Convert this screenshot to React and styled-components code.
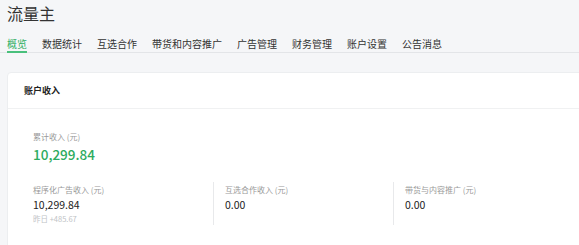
import React from "react";
import styled, { createGlobalStyle } from "styled-components";

const GlobalStyle = createGlobalStyle`
  html, body {
    margin: 0;
    padding: 0;
    background: #f5f6f8;
    overflow: hidden;
  }
  body {
    font-family: "Noto Sans CJK SC", "Noto Sans", sans-serif;
    color: #333;
  }
`;

const Page = styled.div`
  padding-left: 7px;
`;

const Title = styled.h1`
  margin: 0;
  padding-top: 2px;
  font-size: 16px;
  line-height: 22px;
  font-weight: 400;
  color: #333;
`;

const TabBar = styled.nav`
  display: flex;
  gap: 15px;
  margin-top: 13px;
  margin-left: -7px;
  padding-left: 7px;
  border-bottom: 1px solid #e3e5e8;
`;

const Tab = styled.span`
  font-size: 10px;
  line-height: 14px;
  color: ${(p) => (p.$active ? "#2eae63" : "#333")};
  border-bottom: 2px solid ${(p) => (p.$active ? "#49c07c" : "transparent")};
  margin-bottom: -1px;
`;

const Card = styled.section`
  margin-top: 19px;
  margin-right: -10px;
  background: #fff;
  border: 1px solid #eceef0;
  border-radius: 4px;
  min-height: 200px;
`;

const CardHeader = styled.div`
  height: 35px;
  display: flex;
  align-items: center;
  padding-left: 16px;
  border-bottom: 1px solid #f0f1f2;
  font-size: 9px;
  font-weight: 700;
  color: #222;
`;

const CardBody = styled.div`
  padding: 22px 0 0 25px;
`;

const Label = styled.div`
  font-size: 8px;
  line-height: 12px;
  color: #999;
`;

const Total = styled.div`
  margin-top: 2px;
  font-size: 13.5px;
  line-height: 18px;
  font-weight: 500;
  color: #2dab60;
`;

const Stats = styled.div`
  display: flex;
  margin-top: 19px;
`;

const Stat = styled.div`
  width: 180px;
  min-height: 43px;
  padding-top: 2px;
  box-sizing: border-box;
  & + & {
    border-left: 1px solid #e8e9eb;
    padding-left: 11px;
  }
`;

const Value = styled.div`
  margin-top: 1px;
  font-size: 10.5px;
  line-height: 15px;
  color: #222;
`;

const Sub = styled.div`
  margin-top: 1px;
  font-size: 7.5px;
  line-height: 12px;
  color: #c0c3c6;
`;

const tabs = ["概览", "数据统计", "互选合作", "带货和内容推广", "广告管理", "财务管理", "账户设置", "公告消息"];

const stats = [
  { label: "程序化广告收入 (元)", value: "10,299.84", sub: "昨日 +485.67" },
  { label: "互选合作收入 (元)", value: "0.00" },
  { label: "带货与内容推广 (元)", value: "0.00" },
];

export default function App() {
  return (
    <Page>
      <GlobalStyle />
      <Title>流量主</Title>
      <TabBar>
        {tabs.map((t, i) => (
          <Tab key={t} $active={i === 0}>
            {t}
          </Tab>
        ))}
      </TabBar>
      <Card>
        <CardHeader>账户收入</CardHeader>
        <CardBody>
          <Label>累计收入 (元)</Label>
          <Total>10,299.84</Total>
          <Stats>
            {stats.map((s) => (
              <Stat key={s.label}>
                <Label>{s.label}</Label>
                <Value>{s.value}</Value>
                {s.sub && <Sub>{s.sub}</Sub>}
              </Stat>
            ))}
          </Stats>
        </CardBody>
      </Card>
    </Page>
  );
}
